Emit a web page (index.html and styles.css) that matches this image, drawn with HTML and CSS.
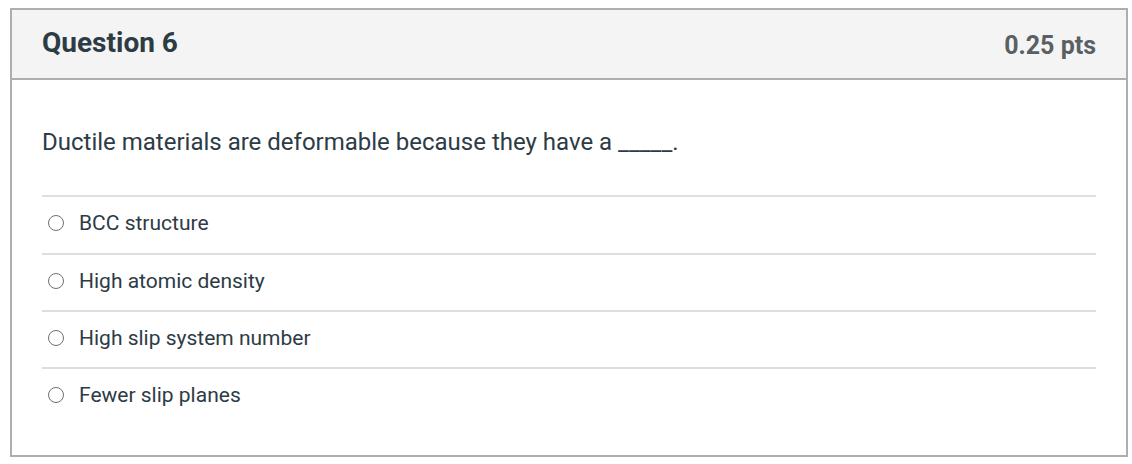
FILE: index.html
```html
<!DOCTYPE html>
<html lang="en">
<head>
<meta charset="utf-8">
<link rel="stylesheet" href="styles.css">
</head>
<body>
<div class="card">
  <div class="card-header">
    <h2 class="title">Question 6</h2>
    <span class="pts">0.25 pts</span>
  </div>
  <div class="card-body">
    <p class="question">Ductile materials are deformable because they have a _____.</p>
    <ul class="answers">
      <li class="answer"><span class="radio"></span><span class="label">BCC structure</span></li>
      <li class="answer"><span class="radio"></span><span class="label">High atomic density</span></li>
      <li class="answer"><span class="radio"></span><span class="label">High slip system number</span></li>
      <li class="answer"><span class="radio"></span><span class="label">Fewer slip planes</span></li>
    </ul>
  </div>
</div>
</body>
</html>
```
FILE: styles.css
```css
html, body { margin: 0; padding: 0; background: #fff; }
body {
  padding: 8px 4px 0 10px;
  font-family: Roboto, "Liberation Sans", Arial, sans-serif;
  color: #2d3b45;
}
.card {
  border: 2px solid #aeaeae;
  height: 449px;
  box-sizing: border-box;
  display: flex;
  flex-direction: column;
}
.card-header {
  background: #f4f4f4;
  border-bottom: 2px solid #aeaeae;
  height: 70px;
  box-sizing: border-box;
  display: flex;
  align-items: center;
  justify-content: space-between;
  padding: 0 30px 2px 30px;
}
.title {
  margin: 0;
  font-size: 28px;
  line-height: 32px;
  font-weight: 700;
  color: #2d3b45;
}
.pts {
  font-size: 25px;
  line-height: 30px;
  font-weight: 700;
  color: #5a5f63;
  padding-top: 6px;
}
.card-body {
  padding: 0 30px;
}
.question {
  margin: 0;
  padding-top: 48px;
  height: 67px;
  line-height: 28px;
  font-size: 24px;
}
.answers {
  list-style: none;
  margin: 0;
  padding: 0;
}
.answer {
  display: flex;
  align-items: center;
  gap: 15px;
  height: 57px;
  border-top: 2px solid #dedede;
  box-sizing: border-box;
  padding: 0 0 4px 6px;
  font-size: 21px;
}
.answer:first-child { height: 58px; padding-bottom: 5px; }
.radio {
  width: 14px;
  height: 14px;
  border: 1px solid #6f6f6f;
  border-radius: 50%;
  flex: none;
}
```
